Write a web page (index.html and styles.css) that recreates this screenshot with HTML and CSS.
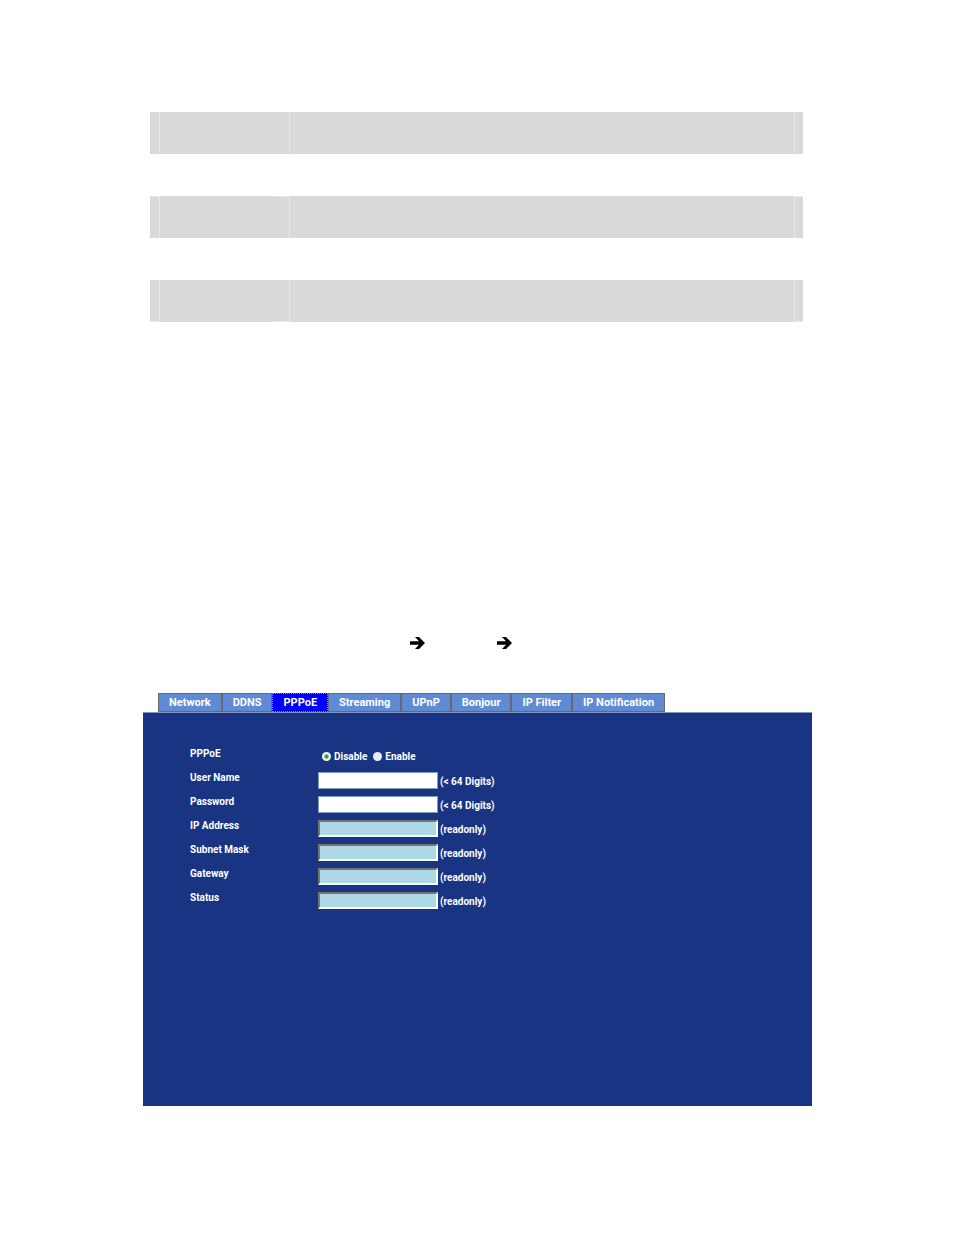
FILE: index.html
```html
<!DOCTYPE html>
<html lang="en">
<head>
  <meta charset="UTF-8">
  <meta name="viewport" content="width=device-width, initial-scale=1.0">
  <title>PPPoE</title>
  <link rel="stylesheet" href="styles.css">
</head>
<body>
  <div class="bands">
    <div class="band">
      <span class="edge"></span><span class="name"></span><span class="mark"></span><span class="text"></span><span class="edge last"></span>
    </div>
    <div class="band rule-top">
      <span class="edge"></span><span class="name"></span><span class="mark"></span><span class="text"></span><span class="edge last"></span>
    </div>
    <div class="band rule-bottom">
      <span class="edge"></span><span class="name"></span><span class="mark"></span><span class="text"></span><span class="edge last"></span>
    </div>
  </div>

  <div class="path">
    <svg class="arrow" viewBox="0 0 15 12" aria-hidden="true"><path d="M0 4.2H9L5 0H9L15 6L9 12H5L9 7.8H0Z"/></svg>
    <svg class="arrow" viewBox="0 0 15 12" aria-hidden="true"><path d="M0 4.2H9L5 0H9L15 6L9 12H5L9 7.8H0Z"/></svg>
  </div>

  <div class="setup">
    <nav class="tabs">
      <button type="button">Network</button>
      <button type="button">DDNS</button>
      <button type="button" class="active">PPPoE</button>
      <button type="button">Streaming</button>
      <button type="button">UPnP</button>
      <button type="button">Bonjour</button>
      <button type="button">IP Filter</button>
      <button type="button">IP Notification</button>
    </nav>
    <form class="panel">
      <div class="row" role="radiogroup" aria-labelledby="pppoe">
        <span class="label" id="pppoe">PPPoE</span>
        <div class="choices">
          <input type="radio" name="pppoe" id="disable" checked><label for="disable">Disable</label>
          <input type="radio" name="pppoe" id="enable"><label for="enable">Enable</label>
        </div>
      </div>
      <div class="row">
        <label class="label" for="user">User Name</label>
        <input type="text" class="field" id="user"><span class="hint">(&lt; 64 Digits)</span>
      </div>
      <div class="row">
        <label class="label" for="password">Password</label>
        <input type="password" class="field" id="password"><span class="hint">(&lt; 64 Digits)</span>
      </div>
      <div class="row">
        <label class="label" for="ip">IP Address</label>
        <input type="text" class="field" id="ip" readonly><span class="hint">(readonly)</span>
      </div>
      <div class="row">
        <label class="label" for="mask">Subnet Mask</label>
        <input type="text" class="field" id="mask" readonly><span class="hint">(readonly)</span>
      </div>
      <div class="row">
        <label class="label" for="gateway">Gateway</label>
        <input type="text" class="field" id="gateway" readonly><span class="hint">(readonly)</span>
      </div>
      <div class="row">
        <label class="label" for="status">Status</label>
        <input type="text" class="field" id="status" readonly><span class="hint">(readonly)</span>
      </div>
    </form>
  </div>
</body>
</html>
```
FILE: styles.css
```css
body {
  margin: 0;
  padding: 112px 142px 129px 143px;
  background: #fff;
  font-family: Roboto, "Liberation Sans", Arial, sans-serif;
  font-size: 10px;
  font-weight: bold;
}
.bands {
  display: flex;
  flex-direction: column;
  gap: 42px;
  margin: 0 9px 0 7px;
}
.band {
  display: flex;
  height: 42px;
  background: #d9d9d9;
}
.band span {
  box-sizing: border-box;
  border-right: 1px solid #e8e8e8;
}
.band .edge {
  width: 10px;
}
.band .name {
  width: 113px;
  border-right: none;
}
.band .mark {
  width: 17px;
}
.band .text {
  flex: 1;
}
.band .last {
  width: 8px;
  border-right: none;
}
.rule-top .edge, .rule-top .mark {
  border-top: 1px solid #e8e8e8;
}
.rule-bottom .edge, .rule-bottom .mark {
  border-bottom: 1px solid #e8e8e8;
}
.path {
  display: flex;
  gap: 72px;
  margin: 315px 0 0 267px;
}
.arrow {
  width: 15px;
  height: 12px;
}
.setup {
  margin-top: 44px;
}
.tabs {
  display: flex;
  padding-left: 15px;
}
.tabs button {
  height: 19px;
  padding: 0 10px;
  border: 1px solid #66696f;
  background: #5f8bd5;
  color: #fff;
  font: bold 11px/17px Roboto, "Liberation Sans", Arial, sans-serif;
  cursor: pointer;
}
.tabs .active {
  border: 1px dotted #8585c0;
  background: #00f;
}
.panel {
  min-height: 359px;
  padding: 34px 20px 0 47px;
  border-top: 1px solid #8795b8;
  background: #183483;
  color: #fff;
}
.row {
  display: flex;
  align-items: center;
  height: 24px;
}
.row:first-child {
  height: 18px;
  margin-bottom: 3px;
}
.label {
  width: 128px;
  padding-bottom: 6px;
}
.choices {
  display: flex;
  align-items: center;
}
.choices input {
  appearance: none;
  width: 9px;
  height: 9px;
  margin: 0 3px 0 4px;
  border-radius: 50%;
  background: #e9eeec;
}
.choices label + input {
  margin-left: 6px;
}
.choices input:checked {
  background: radial-gradient(circle, #219c21 0 1px, #f0f5ee 3px);
}
.field {
  box-sizing: border-box;
  width: 120px;
  height: 17px;
  margin: 0;
  padding: 0 2px;
  border: 1px solid #7f9db9;
  background: #fff;
  font-size: 10px;
}
.field:read-only {
  border: 2px solid;
  border-color: #77756f #fff #fff #77756f;
  background: #add8e6;
}
.hint {
  padding: 3px 0 0 2px;
}
```
